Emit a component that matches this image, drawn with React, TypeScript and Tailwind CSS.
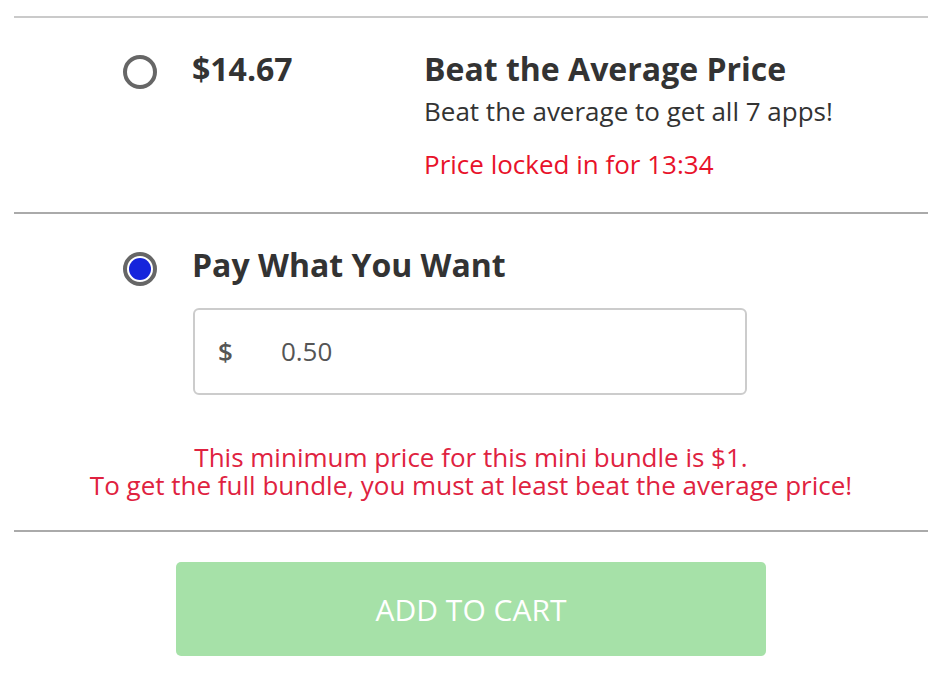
import React, { useState } from 'react';

const font = { fontFamily: '"Open Sans", "Liberation Sans", sans-serif' };

const Radio: React.FC<{ checked: boolean; onClick: () => void }> = ({ checked, onClick }) => (
  <button
    type="button"
    onClick={onClick}
    className="w-[34px] h-[34px] rounded-full border-[4px] border-[#666] bg-white flex items-center justify-center shrink-0"
  >
    {checked && <span className="block w-[22px] h-[22px] rounded-full bg-[#1524dc]" />}
  </button>
);

export default function App() {
  const [choice, setChoice] = useState<'average' | 'pwyw'>('pwyw');
  const [amount, setAmount] = useState('0.50');

  return (
    <div className="w-[946px] h-[688px] bg-white overflow-hidden" style={font}>
      <div className="ml-[14px] w-[914px] pt-[16px]">
        {/* Beat the average */}
        <div className="border-t-2 border-[#cacaca] pt-[32px] pb-[31px] flex items-start">
          <div className="pl-[109px] pt-[5px]">
            <Radio checked={choice === 'average'} onClick={() => setChoice('average')} />
          </div>
          <div className="ml-[35px] w-[232px] text-[32px] leading-[38px] font-bold text-[#333]">$14.67</div>
          <div>
            <div className="text-[32px] leading-[38px] font-bold text-[#333]">Beat the Average Price</div>
            <div className="mt-[6px] text-[26px] leading-[34px] text-[#333]">Beat the average to get all 7 apps!</div>
            <div className="mt-[19px] text-[26px] leading-[34px] text-[#e8122a]">Price locked in for 13:34</div>
          </div>
        </div>

        {/* Pay what you want */}
        <div className="border-t-2 border-[#aaaaaa] pt-[32px] pb-[31px]">
          <div className="flex items-start h-[38px]">
            <div className="pl-[109px] pt-[6px]">
              <Radio checked={choice === 'pwyw'} onClick={() => setChoice('pwyw')} />
            </div>
            <div className="ml-[35px] text-[32px] leading-[38px] font-bold text-[#333]">Pay What You Want</div>
          </div>
          <div className="ml-[179px] mt-[24px] w-[554px] h-[87px] border-2 border-[#cccccc] rounded-[6px] flex items-center">
            <span className="ml-[23px] text-[26px] font-semibold text-[#555]">$</span>
            <input
              value={amount}
              onChange={e => setAmount(e.target.value)}
              className="ml-[48px] w-[400px] text-[26px] text-[#555] outline-none bg-transparent"
            />
          </div>
          <div className="mt-[48px] text-center text-[26px] leading-[28px] text-[#df2240]">
            <div>This minimum price for this mini bundle is $1.</div>
            <div>To get the full bundle, you must at least beat the average price!</div>
          </div>
        </div>

        {/* Add to cart */}
        <div className="border-t-2 border-[#aaaaaa] pt-[30px] flex justify-center">
          <button
            type="button"
            className="w-[590px] h-[94px] rounded-[5px] bg-[#a6e1a8] text-white text-[30px] uppercase"
          >
            Add to Cart
          </button>
        </div>
      </div>
    </div>
  );
}
